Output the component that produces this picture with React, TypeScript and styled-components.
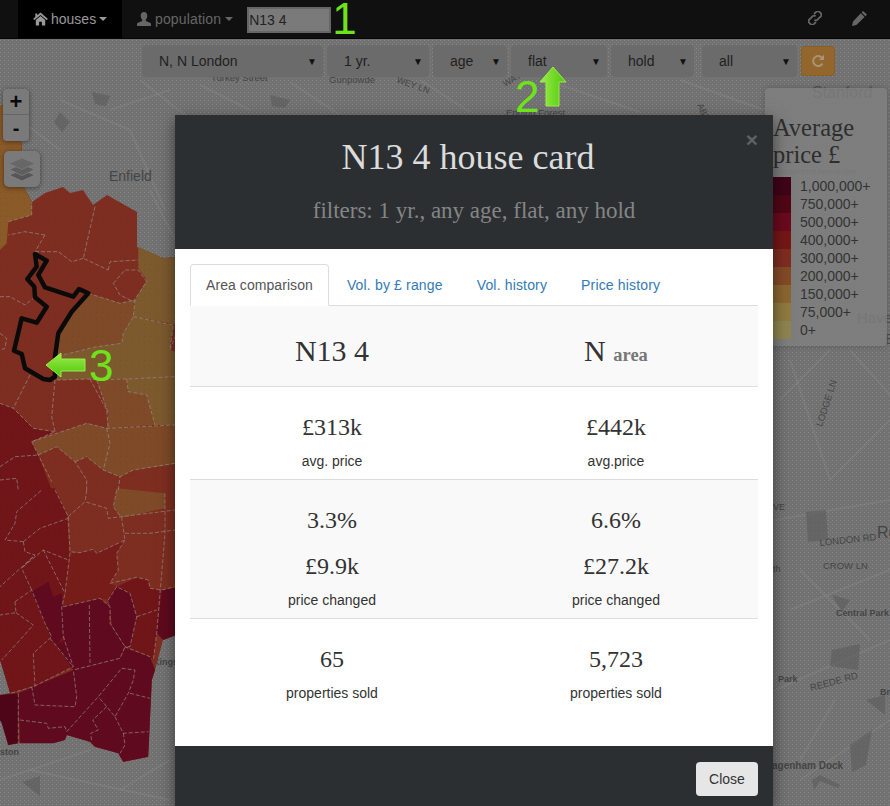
import React from "react";
import styled, { createGlobalStyle } from "styled-components";

const Global = createGlobalStyle`
  html, body { margin: 0; padding: 0; background: #727272; }
  * { box-sizing: border-box; }
`;

type P = [number, number];
const z3 = (p: P[]) => p.map(([x, y]) => `${(x / 3).toFixed(1)},${(y / 3 + 180).toFixed(1)}`).join(" ");
const z4 = (p: P[]) => p.map(([x, y]) => `${(x / 3).toFixed(1)},${(y / 3 + 490).toFixed(1)}`).join(" ");

const OUTLINE =
  "0,105 3,105 3,140 22,142 22,160 10,175 20,180 32,202 45,193 63,187 70,193 83,190 93,205 107,195 137,212 137,247 163,258 180,257 180,634 163,640 155,670 152,680 148,757 123,762 118,753 95,747 90,742 67,735 65,740 53,743 20,743 8,745 2,723 0,720 0,695 10,693 7,677 0,660";

const C = { top: "#8a5a28", org: "#7d5a2e", brn: "#7e4a28", red: "#7e2e20", drk: "#701518", win: "#5f0a1e", dst: "#4f0518", mid: "#761d1a" };

const fills3: [string, P[]][] = [
  [C.top, [[0, -225], [10, -225], [10, -120], [65, -115], [65, -60], [30, -15], [60, 0], [95, 66], [95, 105], [25, 125], [20, 190], [0, 210]]],
  [C.org, [[415, 200], [490, 235], [540, 230], [540, 440], [510, 430], [400, 410], [405, 360], [440, 300], [415, 265]]],
  [C.brn, [[265, 340], [360, 370], [405, 360], [400, 410], [370, 460], [365, 490], [290, 500], [165, 530], [175, 460], [215, 395]]],
  [C.org, [[365, 490], [370, 460], [400, 410], [520, 435], [510, 510], [540, 520], [540, 590], [380, 597], [290, 600], [270, 597], [170, 600], [165, 530], [290, 500]]],
  [C.brn, [[290, 600], [380, 597], [385, 635], [440, 645], [465, 735], [320, 745], [325, 700]]],
  [C.org, [[380, 597], [540, 590], [540, 735], [465, 735], [440, 645], [385, 635]]],
  [C.brn, [[95, 785], [260, 730], [320, 745], [540, 735], [540, 850], [400, 870], [360, 890], [310, 870], [260, 830], [225, 845], [170, 800], [115, 825]]],
  [C.drk, [[0, 670], [40, 685], [100, 745], [165, 755], [95, 785], [115, 825], [155, 930], [0, 930]]],
];

const lines3: P[][] = [
  [[25, 125], [95, 105], [95, 66]],
  [[135, 165], [75, 155], [25, 165]],
  [[135, 165], [105, 215]],
  [[285, 80], [250, 235], [325, 270]],
  [[105, 215], [175, 215], [215, 245], [250, 235]],
  [[325, 270], [330, 245], [415, 240]],
  [[340, 310], [375, 270], [415, 270], [440, 305], [400, 365], [360, 345], [340, 310]],
  [[0, 350], [30, 350], [75, 375], [105, 350]],
  [[0, 460], [20, 475], [15, 505], [0, 510]],
  [[90, 585], [40, 685]],
  [[165, 600], [155, 710], [165, 755]],
  [[270, 597], [320, 690], [325, 745]],
  [[320, 745], [330, 790], [310, 870]],
  [[115, 825], [170, 800], [225, 845], [260, 900], [260, 930]],
  [[225, 845], [260, 830]],
  [[0, 860], [45, 830], [115, 825]],
  [[0, 900], [50, 895], [55, 930]],
  [[355, 930], [360, 890]],
  [[510, 510], [525, 470]],
  [[265, 340], [360, 370], [405, 360], [400, 410], [370, 460], [365, 490], [290, 500], [165, 530]],
  [[400, 410], [520, 435], [510, 510]],
  [[170, 600], [270, 597], [290, 600], [380, 597], [525, 590]],
  [[290, 600], [325, 700]],
  [[380, 597], [385, 635], [440, 645], [465, 735]],
  [[95, 785], [260, 730], [320, 745], [525, 735]],
  [[525, 850], [400, 870], [360, 890], [310, 870], [260, 830]],
  [[0, 670], [40, 685], [100, 745], [165, 755], [95, 785], [115, 825], [155, 905]],
];

const fills4: [string, P[]][] = [
  [C.drk, [[0, -5], [165, -5], [200, 70], [210, 200], [195, 310], [185, 350], [190, 440], [220, 530], [100, 590], [30, 610], [0, 510]]],
  [C.brn, [[350, -5], [495, 10], [495, 55], [365, 85], [340, 50]]],
  [C.red, [[200, 60], [255, 35], [320, 55], [325, 85], [365, 85], [375, 150], [290, 190], [280, 178], [240, 188], [210, 185], [205, 80]]],
  [C.red, [[365, 85], [495, 55], [540, 50], [540, 290], [490, 300], [450, 295], [445, 270], [410, 262], [330, 280], [355, 240], [350, 190], [375, 150]]],
  [C.mid, [[205, 210], [210, 190], [240, 188], [280, 178], [290, 190], [375, 150], [350, 190], [355, 240], [330, 280], [350, 290], [325, 330], [300, 325], [190, 350], [195, 310]]],
  [C.drk, [[350, 290], [410, 262], [445, 270], [450, 295], [485, 300], [470, 430], [460, 510], [450, 500], [375, 475], [390, 470], [410, 380], [390, 310]]],
  [C.win, [[485, 300], [540, 290], [540, 430], [490, 450], [470, 430]]],
  [C.win, [[180, 375], [190, 350], [300, 325], [330, 350], [330, 400], [375, 470], [360, 505], [220, 540], [170, 465], [195, 450], [190, 420]]],
  [C.win, [[325, 330], [350, 290], [390, 310], [410, 380], [390, 470], [375, 470], [335, 405], [330, 350]]],
  [C.win, [[360, 505], [375, 475], [450, 500], [465, 540], [455, 570], [445, 800], [370, 815], [355, 790], [285, 770], [270, 755], [200, 735], [195, 750], [160, 760], [60, 760], [55, 610], [100, 590], [220, 540]]],
  [C.win, [[95, 305], [145, 275], [160, 320], [185, 310], [195, 430], [170, 465], [150, 445], [155, 440], [135, 400]]],
  [C.dst, [[0, 615], [55, 610], [55, 760], [25, 765], [5, 700], [0, 690]]],
];

const lines4: P[][] = [
  [[95, 590], [105, 645], [225, 650], [230, 620], [220, 540]],
  [[60, 690], [140, 700], [145, 715], [195, 710], [200, 725]],
  [[200, 725], [295, 620], [365, 535], [405, 540], [400, 570], [385, 610], [345, 680], [320, 650], [295, 620]],
  [[345, 680], [370, 730], [445, 725]],
  [[370, 730], [375, 765], [360, 790]],
  [[390, 610], [450, 625]],
  [[320, 650], [278, 690], [295, 720], [272, 730], [275, 755]],
  [[268, 345], [270, 520]],
  [[45, 335], [95, 300], [135, 400], [155, 440], [100, 490], [105, 590]],
  [[45, 335], [48, 368], [0, 375]],
  [[48, 368], [100, 405], [60, 450], [5, 510]],
  [[150, 445], [220, 530]],
  [[70, 230], [130, 180], [205, 210]],
  [[70, 155], [75, 185], [105, 195], [0, 290]],
  [[70, 155], [120, 115], [205, 85]],
  [[70, 155], [15, 150], [45, 100], [50, 65], [125, 0]],
  [[95, 300], [65, 235], [105, 195]],
  [[130, 180], [195, 310]],
  [[165, 0], [205, 80], [210, 190], [195, 310], [185, 350], [190, 440], [220, 530], [100, 590], [30, 610]],
  [[205, 80], [255, 35], [320, 55], [325, 85], [525, 60]],
  [[260, 0], [255, 35]],
  [[350, 0], [340, 50], [365, 85], [375, 150], [290, 190], [280, 178], [240, 188], [210, 185]],
  [[375, 150], [350, 190], [355, 240], [330, 280], [410, 262], [445, 270], [450, 295], [485, 300], [525, 290]],
  [[495, 10], [495, 130], [470, 430], [460, 510]],
  [[375, 130], [450, 130], [525, 120]],
  [[190, 350], [300, 325], [330, 350], [330, 400], [375, 470], [360, 505], [220, 540]],
  [[325, 330], [350, 290], [390, 310], [410, 380], [390, 470], [375, 470], [450, 500]],
  [[410, 380], [470, 360]],
  [[55, 610], [55, 760]],
];

const STREETS = [
  "M140 80 L230 150 L175 200", "M60 100 L130 130 L165 210", "M200 85 L250 110", "M290 82 L340 115", "M420 80 L470 112",
  "M560 85 L640 112", "M680 80 L770 112", "M790 360 L830 480 L890 420", "M775 520 L890 500", "M790 610 L890 570",
  "M775 690 L890 640", "M800 780 L890 720", "M30 770 L170 800", "M0 780 L90 750", "M120 790 L170 760", "M780 400 L830 350",
  "M850 350 L890 395", "M800 570 L870 640", "M835 700 L800 760", "M20 120 L60 150", "M110 110 L170 90", "M150 190 L175 240",
];
const BLOBS = [
  "M92 92 L110 96 L106 106 L95 104Z", "M60 112 L70 122 L62 132 L54 122Z", "M270 95 L290 100 L285 108 L272 106Z",
  "M806 512 L826 510 L828 540 L808 542Z", "M832 595 L850 600 L842 612 Z", "M832 650 L860 644 L858 670 L830 666Z",
  "M866 700 L885 695 L885 715 Z", "M850 745 L872 730 L866 765 L852 772Z", "M812 780 L820 775 L840 785 L838 788 L820 781 L814 790Z", "M22 782 L40 776 L40 796 Z",
];

const Stage = styled.div`
  position: relative;
  width: 890px;
  height: 806px;
  overflow: hidden;
  display: flex;
  flex-direction: column;
  font-family: "Liberation Sans", Arial, sans-serif;
  font-size: 14px;
`;
const Navbar = styled.nav`
  height: 39px;
  flex: none;
  background: #101010;
  border-bottom: 1px solid #050505;
  display: flex;
  align-items: stretch;
  padding-left: 18px;
`;
const NavTab = styled.div<{ $active?: boolean }>`
  display: flex;
  align-items: center;
  gap: ${(p) => (p.$active ? "3px" : "4px")};
  padding: 0 15px;
  width: ${(p) => (p.$active ? "104px" : "auto")};
  background: ${(p) => (p.$active ? "#000" : "transparent")};
  color: ${(p) => (p.$active ? "#999" : "#666")};
  letter-spacing: ${(p) => (p.$active ? "0" : "0.15px")};
  svg { flex: none; }
`;
const Caret = styled.span`
  width: 0;
  height: 0;
  border-top: 4px solid currentColor;
  border-left: 4px solid transparent;
  border-right: 4px solid transparent;
`;
const SearchInput = styled.div`
  width: 84px;
  height: 26px;
  margin: 7px 0 0 -1px;
  border: 2px solid #666;
  background: #7a7a7a;
  color: #222;
  padding: 2px 0;
  line-height: 18px;
`;
const NavNumber = styled.div`
  margin-left: 1px;
  font-size: 44px;
  line-height: 38px;
  color: #6fe31a;
`;
const NavRight = styled.div`
  margin-left: auto;
  display: flex;
  align-items: center;
  gap: 30px;
  padding: 0 23px 2px 0;
  color: #666;
`;
const MapArea = styled.main`
  position: relative;
  flex: 1;
  background: #717171;
`;
const MapSvg = styled.svg`
  position: absolute;
  inset: 0;
  width: 890px;
  height: 767px;
  display: block;
`;
const FilterBar = styled.div`
  position: absolute;
  top: 6px;
  left: 142px;
  display: flex;
  gap: 4px;
`;
const Select = styled.div<{ $w: number; $gap?: boolean }>`
  width: ${(p) => p.$w}px;
  height: 32px;
  margin-left: ${(p) => (p.$gap ? "4px" : "0")};
  background: #6b6b6b;
  border-radius: 4px;
  color: #1f1f1f;
  display: flex;
  align-items: center;
  justify-content: space-between;
  padding: 0 5px 0 17px;
  &::after {
    content: "▼";
    font-size: 10px;
    color: #111;
    width: 11px;
  }
`;
const Refresh = styled.div`
  width: 34px;
  height: 30px;
  margin-top: 1px;
  background: #92662c;
  border: 1px solid #8a5f28;
  border-radius: 3px;
  display: flex;
  align-items: center;
  justify-content: center;
  color: #a89478;
`;
const ZoomBox = styled.div`
  position: absolute;
  left: 3px;
  top: 50px;
  width: 26px;
  background: #7a7a7a;
  border-radius: 4px;
  box-shadow: 0 1px 5px rgba(0, 0, 0, 0.45);
`;
const ZoomBtn = styled.div<{ $top?: boolean }>`
  height: 26px;
  display: flex;
  align-items: center;
  justify-content: center;
  color: #0a0a0a;
  font-weight: 700;
  font-size: ${(p) => (p.$top ? "22px" : "20px")};
  border-bottom: ${(p) => (p.$top ? "1px solid #666" : "none")};
`;
const LayersBtn = styled.div`
  position: absolute;
  left: 4px;
  top: 112px;
  width: 36px;
  height: 36px;
  background: #7a7a7a;
  border-radius: 5px;
  box-shadow: 0 1px 5px rgba(0, 0, 0, 0.45);
  display: flex;
  align-items: center;
  justify-content: center;
`;
const Legend = styled.aside`
  position: absolute;
  left: 765px;
  top: 49px;
  width: 122px;
  height: 258px;
  background: rgba(128, 128, 128, 0.78);
  border-radius: 4px;
  padding: 26px 0 0 8px;
  box-shadow: 0 0 6px rgba(0, 0, 0, 0.2);
`;
const LegendTitle = styled.div`
  font-family: "Liberation Serif", "Times New Roman", serif;
  font-size: 24.5px;
  line-height: 27px;
  color: #2e2e2e;
  margin-bottom: 9px;
`;
const LegendRow = styled.div`
  display: flex;
  align-items: center;
  height: 18px;
  color: #333;
`;
const Swatch = styled.span<{ $c: string }>`
  width: 18px;
  height: 18px;
  margin-right: 9px;
  background: ${(p) => p.$c};
`;
const Modal = styled.section`
  position: absolute;
  left: 175px;
  top: 76px;
  width: 598px;
  height: 691px;
  display: flex;
  flex-direction: column;
  background: #fff;
  box-shadow: 0 5px 15px rgba(0, 0, 0, 0.5);
`;
const ModalHead = styled.header`
  position: relative;
  height: 134px;
  flex: none;
  background: #2b2f32;
  text-align: center;
  font-family: "Liberation Serif", "Times New Roman", serif;
  padding-top: 20px;
`;
const ModalTitle = styled.h1`
  margin: 0;
  padding-right: 12px;
  font-weight: 400;
  font-size: 36px;
  line-height: 44px;
  color: #dcdcdc;
`;
const ModalSub = styled.h2`
  margin: 20px 0 0;
  font-weight: 400;
  font-size: 23px;
  line-height: 24px;
  color: #858585;
`;
const CloseX = styled.span`
  position: absolute;
  right: 15px;
  top: 12px;
  font-family: "Liberation Sans", Arial, sans-serif;
  font-weight: 700;
  font-size: 21px;
  line-height: 26px;
  color: #5f6264;
`;
const ModalBody = styled.div`
  flex: 1;
  padding: 15px 15px 0;
`;
const Tabs = styled.div`
  display: flex;
  height: 42px;
  border-bottom: 1px solid #ddd;
`;
const Tab = styled.div<{ $active?: boolean }>`
  margin-right: 2px;
  padding: 10px 15px;
  line-height: 20px;
  height: ${(p) => (p.$active ? "42px" : "41px")};
  border: 1px solid ${(p) => (p.$active ? "#ddd" : "transparent")};
  border-bottom-color: ${(p) => (p.$active ? "#fff" : "transparent")};
  border-radius: 4px 4px 0 0;
  background: #fff;
  color: ${(p) => (p.$active ? "#555" : "#337ab7")};
  letter-spacing: ${(p) => (p.$active ? "0.07px" : "0.16px")};
`;
const Row = styled.div<{ $h: number; $alt?: boolean; $last?: boolean }>`
  display: grid;
  grid-template-columns: 1fr 1fr;
  height: ${(p) => p.$h}px;
  background: ${(p) => (p.$alt ? "#f9f9f9" : "#fff")};
  border-bottom: ${(p) => (p.$last ? "none" : "1px solid #ddd")};
`;
const Cell = styled.div`
  text-align: center;
  color: #333;
  padding-top: 27px;
`;
const HeadCell = styled(Cell)`
  padding-top: 28px;
  font-family: "Liberation Serif", "Times New Roman", serif;
  font-size: 30px;
  line-height: 33px;
  small { font-size: 18.5px; font-weight: 700; color: #777; }
`;
const Value = styled.div`
  font-family: "Liberation Serif", "Times New Roman", serif;
  font-size: 24px;
  line-height: 26px;
  margin-bottom: 12px;
  & + & { margin-top: 20px; }
`;
const Label = styled.div`
  font-size: 14px;
  line-height: 18px;
  color: #333;
`;
const ModalFoot = styled.footer`
  height: 60px;
  flex: none;
  background: #2b2f32;
  display: flex;
  justify-content: flex-end;
  padding: 16px 15px 0;
`;
const CloseButton = styled.div`
  width: 62px;
  height: 34px;
  background: #e6e6e6;
  border-radius: 4px;
  color: #333;
  display: flex;
  align-items: center;
  justify-content: center;
`;
const Annotation = styled.svg`
  position: absolute;
  overflow: visible;
`;
const Arrow2 = styled(Annotation)`
  left: 540px;
  top: 67px;
  width: 26px;
  height: 40px;
`;
const Arrow3 = styled(Annotation)`
  left: 46px;
  top: 353px;
  width: 40px;
  height: 24px;
`;
const Num = styled.div<{ $x: number; $y: number }>`
  position: absolute;
  left: ${(p) => p.$x}px;
  top: ${(p) => p.$y}px;
  font-size: 44px;
  line-height: 40px;
  color: #6fe31a;
`;

const legend: [string, string][] = [
  ["#3f0418", "1,000,000+"],
  ["#500616", "750,000+"],
  ["#6a0a1e", "500,000+"],
  ["#761616", "400,000+"],
  ["#7e2d20", "300,000+"],
  ["#844a26", "200,000+"],
  ["#8a6630", "150,000+"],
  ["#8f7b3f", "75,000+"],
  ["#8e8450", "0+"],
];

const MapLabel = styled.text`
  font-family: "Liberation Sans", Arial, sans-serif;
  fill: #454545;
`;

const labels: { x: number; y: number; s: number; t: string; r?: number; b?: boolean; o?: number }[] = [
  { x: 109, y: 181, s: 14, t: "Enfield" },
  { x: 211, y: 81, s: 9.5, t: "Turkey Street" },
  { x: 329, y: 83, s: 9.5, t: "Gunpowde" },
  { x: 396, y: 82, s: 9, t: "WEY LN", r: 20 },
  { x: 506, y: 116, s: 9.5, t: "Epping Forest" },
  { x: 505, y: 87, s: 9, t: "WAY", r: -30 },
  { x: 697, y: 105, s: 9, t: "ABB", r: 65 },
  { x: 812, y: 98, s: 16, t: "Stanford", o: 0.7 },
  { x: 779, y: 174, s: 8, t: "Stapleford Aerodrome", o: 0.5 },
  { x: 857, y: 323, s: 15, t: "Have", o: 0.7 },
  { x: 885, y: 344, s: 14, t: "B", o: 0.8 },
  { x: 822, y: 427, s: 9.5, t: "LODGE LN", r: -72 },
  { x: 820, y: 546, s: 9.5, t: "LONDON RD", r: -6 },
  { x: 823, y: 569, s: 9.5, t: "CROW LN" },
  { x: 836, y: 616, s: 9, t: "Central Park", b: true },
  { x: 811, y: 691, s: 9.5, t: "REEDE RD", r: -15 },
  { x: 778, y: 682, s: 9, t: "Park", b: true },
  { x: 880, y: 695, s: 9, t: "Br", b: true },
  { x: 877, y: 538, s: 16, t: "Ro" },
  { x: 772, y: 769, s: 10, t: "agenham Dock", b: true },
  { x: 773, y: 510, s: 9, t: "VE" },
  { x: 773, y: 572, s: 9, t: "th" },
  { x: 153, y: 665, s: 9, t: "Kings", b: true },
  { x: 0, y: 755, s: 9, t: "ston", b: true },
];

const House = () => (
  <svg width="15" height="14" viewBox="0 0 16 14" fill="currentColor">
    <path d="M8 0 L16 7 L14.4 8 L8 2.6 L1.6 8 L0 7 L2.5 4.8 V1 H4.5 V3 Z M3 8 L8 3.8 L13 8 V14 H9.5 V10 H6.5 V14 H3 Z" />
  </svg>
);
const Person = () => (
  <svg width="14" height="14" viewBox="0 0 14 14" fill="currentColor">
    <path d="M7 0 C9 0 10.3 1.6 10.3 3.8 C10.3 5.5 9.6 7 8.8 7.8 V9 L13 10.8 C13.7 11.1 14 11.6 14 12.4 V14 H0 V12.4 C0 11.6 .3 11.1 1 10.8 L5.2 9 V7.8 C4.4 7 3.7 5.5 3.7 3.8 C3.7 1.6 5 0 7 0 Z" />
  </svg>
);
const LinkIcon = () => (
  <svg width="14" height="14" viewBox="0 0 14 14" fill="none" stroke="currentColor" strokeWidth="1.8">
    <path d="M6 3 L8.2 .9 C9.2 0 10.5 0 11.4 .8 L12.9 2.3 C13.8 3.3 13.6 4.4 12.8 5.3 L9.2 8.8 C8.4 9.6 7.2 9.4 6.4 8.8" />
    <path d="M8 11 L5.8 13.1 C4.8 14 3.5 14 2.6 13.2 L1.1 11.7 C.2 10.7 .4 9.6 1.2 8.7 L4.8 5.2 C5.6 4.4 6.8 4.6 7.6 5.2" />
  </svg>
);
const Pencil = () => (
  <svg width="15" height="15" viewBox="0 0 15 15" fill="currentColor">
    <path d="M11 0 L15 3.6 L13.4 5.2 L9.6 1.4 Z M8.8 2.2 L12.6 6 L4.4 14 L0 15 L1 10.6 Z" />
  </svg>
);
const RefreshIcon = () => (
  <svg width="14" height="14" viewBox="0 0 14 14" fill="none" stroke="currentColor" strokeWidth="2">
    <path d="M11.5 9.5 A5 5 0 1 1 11 3.8" />
    <path d="M13 .5 V6 H8 Z" fill="currentColor" stroke="none" />
  </svg>
);
const LayersIcon = () => (
  <svg width="28" height="24" viewBox="0 0 28 24">
    <path d="M14 13 L27 18 L14 24 L1 18 Z" fill="#565656" stroke="#858585" strokeWidth=".7" />
    <path d="M14 7 L27 12.5 L14 18.5 L1 12.5 Z" fill="#5e5e5e" stroke="#858585" strokeWidth=".7" />
    <path d="M14 1 L27 6.5 L14 12.5 L1 6.5 Z" fill="#676767" stroke="#7c7c7c" strokeWidth=".7" />
  </svg>
);

const MapDrawing = () => (
  <MapSvg viewBox="0 39 890 767">
    <defs>
      <pattern id="stip" width="4" height="4" patternUnits="userSpaceOnUse">
        <rect x="0" y="0" width="1" height="1" fill="#8a8a8a" />
        <rect x="2" y="2" width="1" height="1" fill="#808080" />
      </pattern>
      <pattern id="stipRed" width="6" height="6" patternUnits="userSpaceOnUse">
        <rect x="0" y="0" width="1" height="1" fill="#000" opacity=".08" />
      </pattern>
    </defs>
    <rect x="0" y="39" width="890" height="767" fill="url(#stip)" />
    {STREETS.map((d) => (
      <path key={d} d={d} fill="none" stroke="#868686" strokeWidth="2" opacity=".4" />
    ))}
    {BLOBS.map((d) => (
      <path key={d} d={d} fill="#5f5f5f" opacity=".7" />
    ))}
    {labels.map((l) => (
      <MapLabel
        key={l.t + l.x}
        x={l.x}
        y={l.y}
        fontSize={l.s}
        fontWeight={l.b ? 700 : 400}
        opacity={l.o ?? 1}
        transform={l.r ? `rotate(${l.r} ${l.x} ${l.y})` : undefined}
      >
        {l.t}
      </MapLabel>
    ))}
    <polygon points={OUTLINE} fill={C.red} />
    {fills3.map(([c, p], i) => (
      <polygon key={`a${i}`} points={z3(p)} fill={c} />
    ))}
    {fills4.map(([c, p], i) => (
      <polygon key={`b${i}`} points={z4(p)} fill={c} />
    ))}
    <polygon points={OUTLINE} fill="url(#stipRed)" />
    {lines3.map((p, i) => (
      <polyline key={`c${i}`} points={z3(p)} fill="none" stroke="#969088" strokeWidth=".8" strokeDasharray="4 2" opacity=".85" />
    ))}
    {lines4.map((p, i) => (
      <polyline key={`d${i}`} points={z4(p)} fill="none" stroke="#968a88" strokeWidth=".8" strokeDasharray="4 2" opacity=".85" />
    ))}
    <polygon
      points={z3([[105, 222], [140, 242], [115, 285], [135, 322], [220, 350], [237, 327], [265, 340], [215, 395], [175, 460], [165, 530], [165, 590], [150, 600], [130, 597], [75, 565], [65, 522], [42, 512], [65, 415], [110, 428], [140, 380], [105, 352], [103, 320], [82, 297], [110, 260]])}
      fill="none"
      stroke="#0a0a0a"
      strokeWidth="4.5"
      strokeLinejoin="round"
    />
  </MapSvg>
);

const selects: [string, number][] = [
  ["N, N London", 181],
  ["1 yr.", 102],
  ["age", 74],
  ["flat", 96],
  ["hold", 83],
];

export default function App() {
  return (
    <Stage>
      <Global />
      <Navbar>
        <NavTab $active>
          <House />
          houses
          <Caret />
        </NavTab>
        <NavTab>
          <Person />
          population
          <Caret />
        </NavTab>
        <SearchInput>N13 4</SearchInput>
        <NavNumber>1</NavNumber>
        <NavRight>
          <LinkIcon />
          <Pencil />
        </NavRight>
      </Navbar>
      <MapArea>
        <MapDrawing />
        <FilterBar>
          {selects.map(([t, w]) => (
            <Select key={t} $w={w}>
              {t}
            </Select>
          ))}
          <Select $w={95} $gap>
            all
          </Select>
          <Refresh>
            <RefreshIcon />
          </Refresh>
        </FilterBar>
        <ZoomBox>
          <ZoomBtn $top>+</ZoomBtn>
          <ZoomBtn>-</ZoomBtn>
        </ZoomBox>
        <LayersBtn>
          <LayersIcon />
        </LayersBtn>
        <Legend>
          <LegendTitle>
            Average
            <br />
            price £
          </LegendTitle>
          {legend.map(([c, t]) => (
            <LegendRow key={t}>
              <Swatch $c={c} />
              {t}
            </LegendRow>
          ))}
        </Legend>
        <Modal>
          <ModalHead>
            <CloseX>×</CloseX>
            <ModalTitle>N13 4 house card</ModalTitle>
            <ModalSub>filters: 1 yr., any age, flat, any hold</ModalSub>
          </ModalHead>
          <ModalBody>
            <Tabs>
              <Tab $active>Area comparison</Tab>
              <Tab>Vol. by £ range</Tab>
              <Tab>Vol. history</Tab>
              <Tab>Price history</Tab>
            </Tabs>
            <Row $h={81} $alt>
              <HeadCell>N13 4</HeadCell>
              <HeadCell>
                N <small>area</small>
              </HeadCell>
            </Row>
            <Row $h={93}>
              <Cell>
                <Value>£313k</Value>
                <Label>avg. price</Label>
              </Cell>
              <Cell>
                <Value>£442k</Value>
                <Label>avg.price</Label>
              </Cell>
            </Row>
            <Row $h={139} $alt>
              <Cell>
                <Value>3.3%</Value>
                <Value>£9.9k</Value>
                <Label>price changed</Label>
              </Cell>
              <Cell>
                <Value>6.6%</Value>
                <Value>£27.2k</Value>
                <Label>price changed</Label>
              </Cell>
            </Row>
            <Row $h={100} $last>
              <Cell>
                <Value>65</Value>
                <Label>properties sold</Label>
              </Cell>
              <Cell>
                <Value>5,723</Value>
                <Label>properties sold</Label>
              </Cell>
            </Row>
          </ModalBody>
          <ModalFoot>
            <CloseButton>Close</CloseButton>
          </ModalFoot>
        </Modal>
      </MapArea>
      <Arrow2 viewBox="0 0 26 40">
        <defs>
          <linearGradient id="g2" x1="0" x2="1" y1="0" y2="0">
            <stop offset="0" stopColor="#9bec4a" />
            <stop offset="1" stopColor="#4fc80a" />
          </linearGradient>
        </defs>
        <path d="M13 0 L26 15 H19 V39 H6 V15 H0 Z" fill="url(#g2)" stroke="#9bec4a" strokeWidth="1" />
      </Arrow2>
      <Arrow3 viewBox="0 0 40 24">
        <defs>
          <linearGradient id="g3" x1="0" x2="0" y1="0" y2="1">
            <stop offset="0" stopColor="#9bec4a" />
            <stop offset="1" stopColor="#4fc80a" />
          </linearGradient>
        </defs>
        <path d="M0 12 L15 0 V6 H39 V18 H15 V24 Z" fill="url(#g3)" stroke="#9bec4a" strokeWidth="1" />
      </Arrow3>
      <Num $x={515} $y={77}>2</Num>
      <Num $x={89} $y={346}>3</Num>
    </Stage>
  );
}
